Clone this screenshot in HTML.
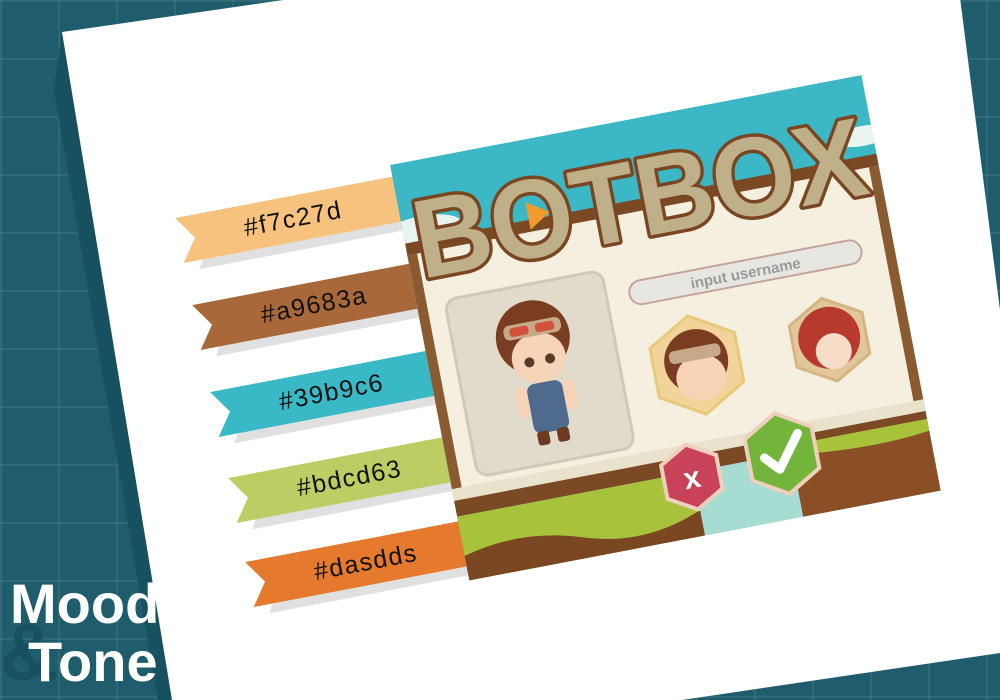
<!DOCTYPE html>
<html><head><meta charset="utf-8"><style>
html,body{margin:0;padding:0}
body{width:1000px;height:700px;overflow:hidden;position:relative;background:#1f5d6d;
background-image:linear-gradient(rgba(255,255,255,0.07) 2px,transparent 2px),linear-gradient(90deg,rgba(255,255,255,0.07) 2px,transparent 2px);
background-size:58px 58px;font-family:"Liberation Sans",sans-serif}
.shadow{position:absolute;left:0;top:0;width:1000px;height:700px;background:#17505e;
clip-path:polygon(54px 90px,62px 32px,172px 700px,158px 700px)}
.paper{position:absolute;left:0;top:0;width:1000px;height:700px;background:#fff;
clip-path:polygon(62px 32px,948px -96px,1000px 310px,1000px 653px,682px 700px,172px 700px)}
.rib{position:absolute;width:240px;height:46px;transform-origin:0 0;transform:rotate(-10.8deg)}
.rib .sh{position:absolute;left:14px;top:9px;width:240px;height:46px;background:#e0e0e0;clip-path:polygon(0 0,100% 0,100% 100%,0 100%,14px 50%)}
.rib .fg{position:absolute;left:0;top:0;width:240px;height:46px;clip-path:polygon(0 0,100% 0,100% 100%,0 100%,16px 50%)}
.rib span{position:absolute;left:66px;top:9px;font-size:25px;color:#111;letter-spacing:1.5px}
.game{position:absolute;left:390px;top:165px;width:480px;height:423px;transform-origin:0 0;transform:rotate(-10.8deg);overflow:hidden}
.mt{position:absolute;color:#fff;font-family:"Liberation Sans Narrow","Liberation Sans",sans-serif;font-weight:bold;line-height:1}
</style></head><body>
<div class="shadow"></div>
<div class="paper"></div>

<div class="rib" style="left:175px;top:218px"><div class="sh"></div><div class="fg" style="background:#f7c27d"></div><span>#f7c27d</span></div>
<div class="rib" style="left:192px;top:305px"><div class="sh"></div><div class="fg" style="background:#a9683a"></div><span>#a9683a</span></div>
<div class="rib" style="left:210px;top:392px"><div class="sh"></div><div class="fg" style="background:#39b9c6"></div><span>#39b9c6</span></div>
<div class="rib" style="left:228px;top:478px"><div class="sh"></div><div class="fg" style="background:#bdcd63"></div><span>#bdcd63</span></div>
<div class="rib" style="left:245px;top:562px"><div class="sh"></div><div class="fg" style="background:#e5792e"></div><span>#dasdds</span></div>

<div class="game">
<svg width="480" height="423" viewBox="0 0 480 423" xmlns="http://www.w3.org/2000/svg">
<rect width="480" height="423" fill="#3bb7c6"/>
<ellipse cx="20" cy="70" rx="40" ry="14" fill="#e8f4f0"/>
<ellipse cx="470" cy="60" rx="30" ry="10" fill="#e8f4f0"/>
<rect x="0" y="80" width="480" height="16" fill="#7b4a25"/>
<rect x="0" y="92" width="480" height="252" fill="#f4efdf"/>
<rect x="0" y="92" width="10" height="252" fill="#8a5a30"/>
<rect x="470" y="92" width="10" height="252" fill="#8a5a30"/>
<rect x="0" y="330" width="480" height="12" fill="#e9e2cc"/>
<rect x="0" y="342" width="480" height="16" fill="#7b4a25"/>
<rect x="0" y="358" width="240" height="65" fill="#a9c23c"/>
<path d="M0 398 Q60 382 120 402 T240 397 V423 H0Z" fill="#7a4722"/>
<rect x="240" y="358" width="100" height="65" fill="#a7dcd2"/>
<rect x="340" y="350" width="140" height="73" fill="#8a4f25"/>
<path d="M340 350 H480 V362 Q420 370 340 360Z" fill="#a9c23c"/>
<!-- card -->
<rect x="28" y="143" width="160" height="180" rx="12" fill="#e1dbcc" stroke="#d1c9b6" stroke-width="3"/>
<circle cx="108" cy="196" r="37" fill="#7a3d22"/>
<ellipse cx="110" cy="217" rx="27" ry="25" fill="#f7d4b8"/>
<rect x="80" y="180" width="58" height="15" rx="6" fill="#c7a889"/>
<rect x="86" y="183" width="19" height="9" rx="3" fill="#d2513a"/><rect x="112" y="183" width="19" height="9" rx="3" fill="#d2513a"/>
<circle cx="100" cy="220" r="5" fill="#5a3a2a"/><circle cx="121" cy="220" r="5" fill="#5a3a2a"/>
<rect x="92" y="242" width="36" height="50" rx="8" fill="#4e6a8c"/>
<rect x="80" y="244" width="12" height="30" rx="5" fill="#f7d4b8"/><rect x="128" y="244" width="12" height="30" rx="5" fill="#f7d4b8"/>
<rect x="94" y="290" width="12" height="14" rx="3" fill="#6b3a20"/><rect x="114" y="290" width="12" height="14" rx="3" fill="#6b3a20"/>
<!-- input -->
<rect x="211" y="160" width="236" height="24" rx="12" fill="#e8e6e1" stroke="#c6a49e" stroke-width="2"/>
<text x="329" y="178" text-anchor="middle" font-family="Liberation Sans Narrow, Liberation Sans, sans-serif" font-weight="bold" font-size="15" fill="#9a9a9a">input username</text>
<!-- avatars -->
<polygon points="264,204 307,229 307,279 264,304 221,279 221,229" fill="#f2d49a" stroke="#e8c97c" stroke-width="3"/>
<circle cx="264" cy="250" r="32" fill="#7a3d22"/><ellipse cx="266" cy="267" rx="25" ry="23" fill="#f7d4b8"/>
<rect x="238" y="236" width="52" height="13" rx="5" fill="#c7a889"/>
<polygon points="399,212 436,233 436,275 399,296 362,275 362,233" fill="#e2c79a" stroke="#d4b583" stroke-width="3"/>
<circle cx="399" cy="252" r="31" fill="#b83a2c"/><ellipse cx="401" cy="266" rx="18" ry="18" fill="#f7dcc8"/>
<!-- buttons -->
<polygon points="238,330 266,346 266,380 238,396 210,380 210,346" fill="#c84358" stroke="#eed0bd" stroke-width="4"/>
<text x="238" y="374" text-anchor="middle" font-weight="bold" font-size="30" fill="#fff">x</text>
<polygon points="331,316 365,336 365,378 331,398 297,378 297,336" fill="#72b53a" stroke="#eed0bd" stroke-width="4"/>
<path d="M313 358 L326 372 L350 340" fill="none" stroke="#fff" stroke-width="9" stroke-linecap="round" stroke-linejoin="round"/>
<!-- logo -->
<text x="10" y="118" textLength="458" lengthAdjust="spacingAndGlyphs" font-family="Liberation Sans, sans-serif" font-weight="bold" font-size="112" fill="#bfb08a" stroke="#7a4622" stroke-width="7" paint-order="stroke" stroke-linejoin="round">BOTBOX</text>
<polygon points="126,62 148,76 126,90" fill="#f29a2c"/>
</svg>
</div>

<div class="mt" style="left:0px;top:612px;font-size:80px;color:#17505e">&amp;</div>
<div class="mt" style="left:10px;top:576px;font-size:56px;color:#fff">Mood</div>
<div class="mt" style="left:28px;top:634px;font-size:56px;color:#fff">Tone</div>
</body></html>
